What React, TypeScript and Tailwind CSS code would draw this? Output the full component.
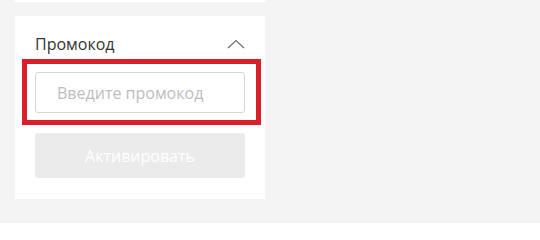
import React from "react";

export default function App() {
  return (
    <div
      className="w-[540px] h-[223px] bg-[#f4f4f4] overflow-hidden"
      style={{ fontFamily: '"Open Sans", "Noto Sans", sans-serif' }}
    >
      <div className="ml-[15px] w-[250px]">
        <div className="h-[2px] bg-white" />
        <div className="mt-[14px] bg-white px-[20px] pt-[17px] pb-[21px]">
          <div className="flex items-center justify-between h-[22px]">
            <span className="text-[16px] leading-[22px] text-[#333333]">Промокод</span>
            <svg width="18" height="10" viewBox="0 0 18 10">
              <path d="M1 9 L9 1.5 L17 9" fill="none" stroke="#707070" strokeWidth="1.2" />
            </svg>
          </div>
          <div className="relative mt-[17px]">
            <div className="absolute left-[-13px] right-[-16px] top-[-13px] bottom-[-12px] border-[5px] border-[#d9202a]" />
            <div className="relative h-[41px] border border-[#d8d5cf] rounded-[3px] bg-white flex items-center pl-[21px]">
              <span className="text-[16px] text-[#bdbdbd]">Введите промокод</span>
            </div>
          </div>
          <div className="mt-[20px] h-[45px] rounded-[3px] bg-[#ebebeb] flex items-center justify-center">
            <span className="text-[16px] text-white">Активировать</span>
          </div>
        </div>
      </div>
    </div>
  );
}
